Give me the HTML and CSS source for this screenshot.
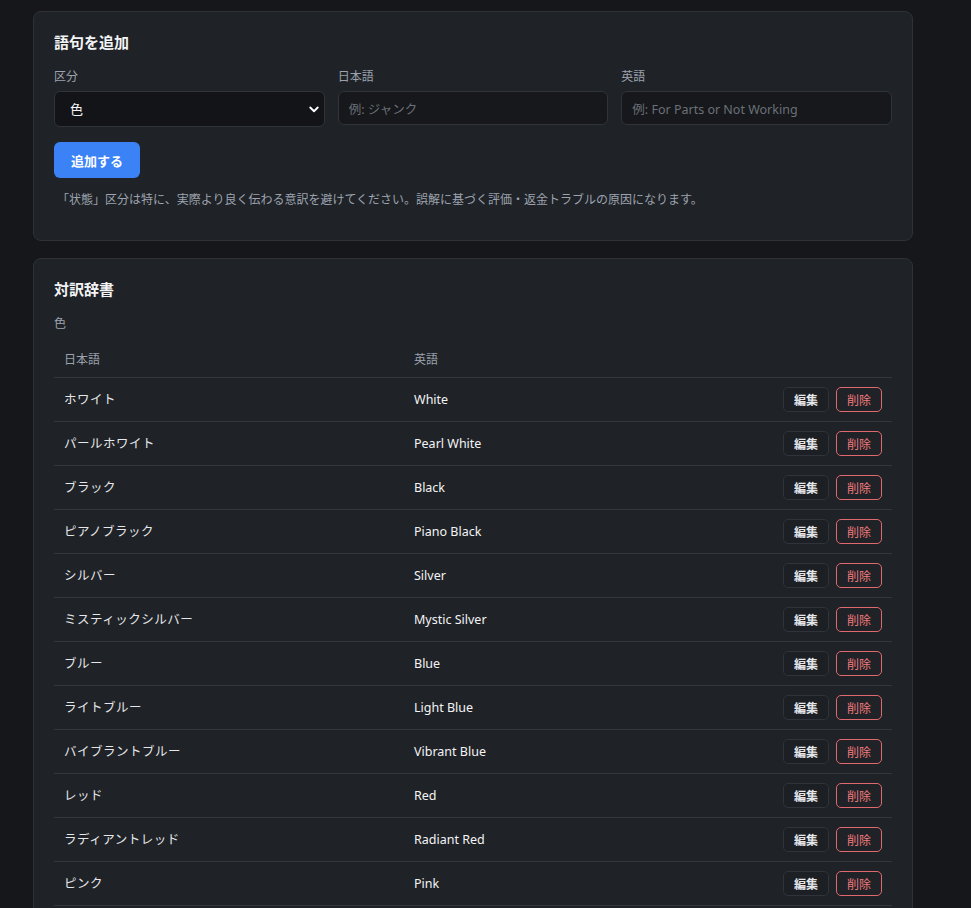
FILE: index.html
```html
<!DOCTYPE html>
<html lang="ja">
<head>
    <meta charset="UTF-8">
    <meta name="viewport" content="width=device-width, initial-scale=1.0">
    <title>対訳辞書</title>
    <link rel="stylesheet" href="styles.css">
</head>
<body>
    <div class="container">
        <section class="card">
            <h2>語句を追加</h2>
            <div class="form-row">
                <label class="field">
                    <span class="field-label">区分</span>
                    <div class="select-wrap">
                        <select id="kubun">
                            <option>色</option>
                            <option>状態</option>
                            <option>素材</option>
                        </select>
                        <svg class="chevron" viewBox="0 0 16 16" width="12" height="12"><path d="M3 6l5 5 5-5" fill="none" stroke="#fff" stroke-width="2.4" stroke-linecap="round" stroke-linejoin="round"/></svg>
                    </div>
                </label>
                <label class="field">
                    <span class="field-label">日本語</span>
                    <input type="text" placeholder="例: ジャンク">
                </label>
                <label class="field">
                    <span class="field-label">英語</span>
                    <input type="text" placeholder="例: For Parts or Not Working">
                </label>
            </div>
            <button class="btn-primary">追加する</button>
            <p class="note">「状態」区分は特に、実際より良く伝わる意訳を避けてください。誤解に基づく評価・返金トラブルの原因になります。</p>
        </section>

        <section class="card">
            <h2>対訳辞書</h2>
            <h3 class="group">色</h3>
            <table>
                <thead>
                    <tr>
                        <th class="col-ja">日本語</th>
                        <th>英語</th>
                        <th></th>
                    </tr>
                </thead>
                <tbody>
                    <tr><td>ホワイト</td><td class="en">White</td><td class="actions"><button class="btn-edit">編集</button><button class="btn-delete">削除</button></td></tr>
                    <tr><td>パールホワイト</td><td class="en">Pearl White</td><td class="actions"><button class="btn-edit">編集</button><button class="btn-delete">削除</button></td></tr>
                    <tr><td>ブラック</td><td class="en">Black</td><td class="actions"><button class="btn-edit">編集</button><button class="btn-delete">削除</button></td></tr>
                    <tr><td>ピアノブラック</td><td class="en">Piano Black</td><td class="actions"><button class="btn-edit">編集</button><button class="btn-delete">削除</button></td></tr>
                    <tr><td>シルバー</td><td class="en">Silver</td><td class="actions"><button class="btn-edit">編集</button><button class="btn-delete">削除</button></td></tr>
                    <tr><td>ミスティックシルバー</td><td class="en">Mystic Silver</td><td class="actions"><button class="btn-edit">編集</button><button class="btn-delete">削除</button></td></tr>
                    <tr><td>ブルー</td><td class="en">Blue</td><td class="actions"><button class="btn-edit">編集</button><button class="btn-delete">削除</button></td></tr>
                    <tr><td>ライトブルー</td><td class="en">Light Blue</td><td class="actions"><button class="btn-edit">編集</button><button class="btn-delete">削除</button></td></tr>
                    <tr><td>バイブラントブルー</td><td class="en">Vibrant Blue</td><td class="actions"><button class="btn-edit">編集</button><button class="btn-delete">削除</button></td></tr>
                    <tr><td>レッド</td><td class="en">Red</td><td class="actions"><button class="btn-edit">編集</button><button class="btn-delete">削除</button></td></tr>
                    <tr><td>ラディアントレッド</td><td class="en">Radiant Red</td><td class="actions"><button class="btn-edit">編集</button><button class="btn-delete">削除</button></td></tr>
                    <tr><td>ピンク</td><td class="en">Pink</td><td class="actions"><button class="btn-edit">編集</button><button class="btn-delete">削除</button></td></tr>
                </tbody>
            </table>
        </section>
    </div>
</body>
</html>
```

FILE: styles.css
```css
html, body {
    margin: 0;
    padding: 0;
    background-color: #15171a;
    overflow: hidden;
}
body {
    font-family: "Noto Sans", "Noto Sans CJK JP", sans-serif;
    color: #e5e7eb;
    padding: 11px 0 0 33px;
}
.container {
    width: 880px;
    display: flex;
    flex-direction: column;
    gap: 17px;
}
.card {
    background: #1f2226;
    border: 1px solid #2e3237;
    border-radius: 8px;
    padding: 20px 20px 31px;
}
h2 {
    margin: 0 0 16px;
    font-size: 15px;
    line-height: 20px;
    font-weight: 700;
    color: #f3f4f6;
}
.form-row {
    display: grid;
    grid-template-columns: 1fr 1fr 1fr;
    gap: 13px;
    align-items: start;
}
.field {
    display: flex;
    flex-direction: column;
    gap: 5px;
}
.field-label {
    font-size: 12px;
    line-height: 18px;
    color: #9ca3af;
}
.select-wrap {
    position: relative;
}
select {
    width: 100%;
    height: 36px;
    appearance: none;
    -webkit-appearance: none;
    background: #131417;
    border: 1px solid #30343a;
    border-radius: 6px;
    color: #f3f4f6;
    font-family: inherit;
    font-size: 13px;
    padding: 0 15px;
    outline: none;
}
.chevron {
    position: absolute;
    right: 5px;
    top: 12px;
    pointer-events: none;
}
input {
    height: 34px;
    box-sizing: border-box;
    background: #16181b;
    border: 1px solid #30343a;
    border-radius: 6px;
    color: #f3f4f6;
    font-family: inherit;
    font-size: 12.5px;
    padding: 2px 10px 0;
    outline: none;
}
input::placeholder {
    color: #6b7078;
}
.btn-primary {
    margin-top: 15px;
    height: 36px;
    padding: 0 17px;
    background: #3b82f6;
    color: #fff;
    border: none;
    border-radius: 6px;
    font-family: inherit;
    font-size: 13px;
    font-weight: 700;
    cursor: pointer;
}
.note {
    margin: 13px 0 0;
    font-size: 12px;
    line-height: 18px;
    color: #9ca3af;
    padding-left: 3px;
}
.group {
    margin: 16px 0 6px;
    font-size: 12px;
    line-height: 18px;
    font-weight: 400;
    color: #9ca3af;
}
.card + .card h2 {
    margin-bottom: 0;
}
table {
    width: 100%;
    border-collapse: collapse;
}
th {
    text-align: left;
    font-size: 12px;
    line-height: 18px;
    font-weight: 400;
    color: #9ca3af;
    padding: 12px 10px 8px;
    border-bottom: 1px solid #33373d;
}
.col-ja {
    width: 330px;
}
td {
    font-size: 12.5px;
    line-height: 18px;
    color: #e5e7eb;
    padding: 9px 10px;
    border-bottom: 1px solid #33373d;
    letter-spacing: 0.5px;
}
td.en {
    letter-spacing: 0;
    color: #f3f4f6;
}
.actions {
    text-align: right;
    white-space: nowrap;
}
.actions button {
    height: 25px;
    padding: 0 10px;
    border-radius: 5px;
    font-family: inherit;
    font-size: 12px;
    font-weight: 700;
    cursor: pointer;
    vertical-align: middle;
}
.btn-edit {
    background: #1c1f23;
    border: 1px solid #30343a;
    color: #e5e7eb;
}
.btn-delete {
    margin-left: 7px;
    background: transparent;
    border: 1px solid #e0686f;
    color: #f07a7f;
    font-weight: 400 !important;
}
```
